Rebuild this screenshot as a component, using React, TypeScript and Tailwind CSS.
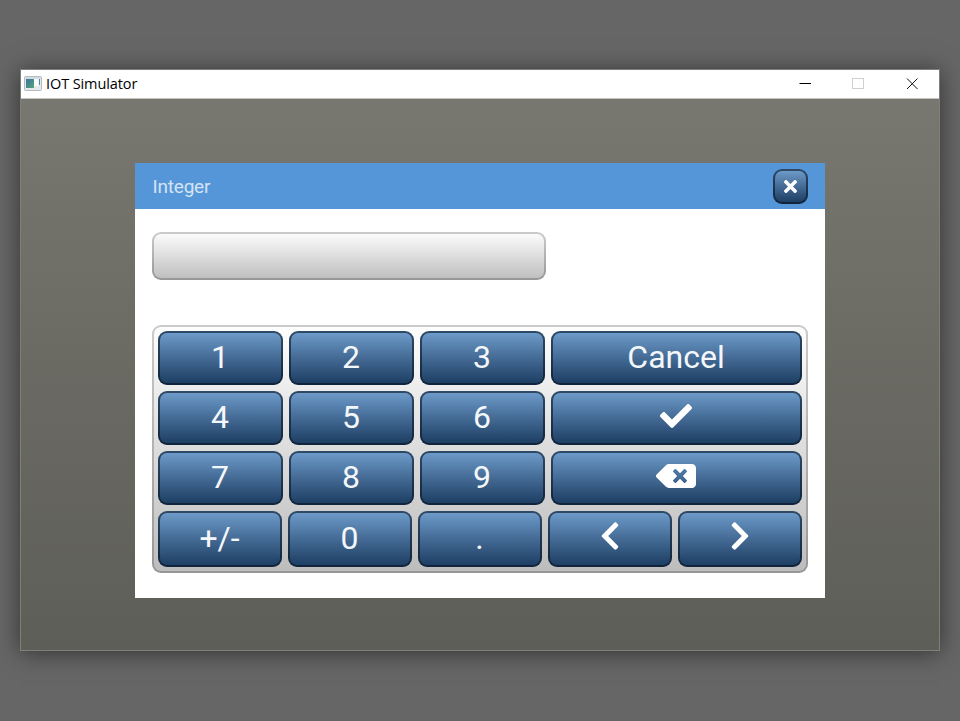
import type { ReactNode } from "react";
import { FaBackspace, FaCheck, FaChevronLeft, FaChevronRight, FaTimes } from "react-icons/fa";

function Key({ children, className = "" }: { children: ReactNode; className?: string }) {
  return (
    <button
      className={`flex min-w-0 items-center justify-center rounded-[9px] bg-gradient-to-b from-[#2f4a66] to-[#10233b] p-[2px] text-[32px] leading-none text-[#f4f7fa] ${className}`}
    >
      <span className="flex h-full w-full items-center justify-center rounded-[7px] bg-gradient-to-b from-[#6d9ac9] to-[#1e3f64] pb-[3px] pr-[1px]">
        {children}
      </span>
    </button>
  );
}

function AppIcon() {
  return (
    <svg width="18" height="15" viewBox="0 0 18 15" className="-mt-[2px]">
      <defs>
        <linearGradient id="pane" x1="0" y1="0" x2="1" y2="1">
          <stop offset="0" stopColor="#3d72a0" />
          <stop offset="1" stopColor="#52a878" />
        </linearGradient>
      </defs>
      <rect x="0.5" y="0.5" width="17" height="14" rx="1" fill="#e6e9ec" stroke="#b3bac2" />
      <rect x="1" y="1" width="16" height="2" fill="#d3dae2" />
      <rect x="2" y="3" width="8" height="9" fill="url(#pane)" />
      <rect x="10" y="3" width="4.5" height="7" fill="#fbfcfd" />
      <rect x="15" y="3" width="1" height="6" fill="#4d9392" />
    </svg>
  );
}

export default function App() {
  return (
    <div className="h-[721px] w-[960px] overflow-hidden bg-[#666666] pl-5 pt-[69px] font-['Roboto',sans-serif]">
      <div className="flex h-[582px] w-[920px] flex-col border border-[#7e7e7a] bg-gradient-to-b from-[#797871] to-[#5d5e57] shadow-[0_2px_22px_rgba(0,0,0,0.5)]">
        <div className="flex h-[29px] shrink-0 items-center border-b border-[#c4c4c1] bg-white pl-[3px]">
          <AppIcon />
          <span className="ml-[4px] font-['Open_Sans',sans-serif] text-[14.5px] leading-none tracking-[-0.1px] text-black">
            IOT Simulator
          </span>
          <div className="ml-auto flex items-center pb-[1px] pr-5">
            <svg width="120" height="14" viewBox="0 0 120 14" fill="none">
              <path d="M0.5 6.5H12" stroke="#000" />
              <rect x="53.5" y="1.5" width="11" height="10" stroke="#d0d0d0" />
              <path d="M108 1.5L118.5 12M118.5 1.5L108 12" stroke="#111" />
            </svg>
          </div>
        </div>

        <div className="ml-[114px] mt-[64px] flex h-[435px] w-[690px] flex-col bg-white">
          <div className="flex h-[46px] shrink-0 items-center justify-between bg-[#5596d9] pl-[17.5px] pr-[17px]">
            <span className="text-[19px] leading-none tracking-[-0.2px] text-[#d4e3f4]">Integer</span>
            <Key className="h-[35px] w-[35px]">
              <FaTimes className="ml-[1px] mt-[3px] text-[19px] text-white" />
            </Key>
          </div>

          <div className="ml-[17px] mt-[23px] h-[48px] w-[394px] rounded-[9px] bg-gradient-to-b from-[#cbcbcb] to-[#979797] p-[2px]">
            <div className="h-full rounded-[7px] bg-gradient-to-b from-[#fbfbfb] to-[#c0c0c0]" />
          </div>

          <div className="ml-[17px] mt-[45px] h-[248px] w-[656px] rounded-[9px] bg-gradient-to-b from-[#cbcbcb] to-[#979797] p-[2px]">
            <div className="flex h-full flex-col gap-[6px] rounded-[7px] bg-gradient-to-b from-[#fdfdfd] to-[#bdbdbd] p-[4px]">
              <div className="grid h-[54px] grid-cols-[125px_125px_125px_251px] gap-[6px]">
                <Key>1</Key>
                <Key>2</Key>
                <Key>3</Key>
                <Key>Cancel</Key>
              </div>
              <div className="grid h-[54px] grid-cols-[125px_125px_125px_251px] gap-[6px]">
                <Key>4</Key>
                <Key>5</Key>
                <Key>6</Key>
                <Key><FaCheck className="mb-[2px] text-white" /></Key>
              </div>
              <div className="grid h-[54px] grid-cols-[125px_125px_125px_251px] gap-[6px]">
                <Key>7</Key>
                <Key>8</Key>
                <Key>9</Key>
                <Key><FaBackspace className="mb-[2px] h-[32px] w-[40px] text-white" /></Key>
              </div>
              <div className="grid h-[56px] grid-cols-5 gap-[6px]">
                <Key>+/-</Key>
                <Key>0</Key>
                <Key>.</Key>
                <Key><FaChevronLeft className="mb-[3px] text-white" /></Key>
                <Key><FaChevronRight className="mb-[3px] text-white" /></Key>
              </div>
            </div>
          </div>
        </div>
      </div>
    </div>
  );
}
